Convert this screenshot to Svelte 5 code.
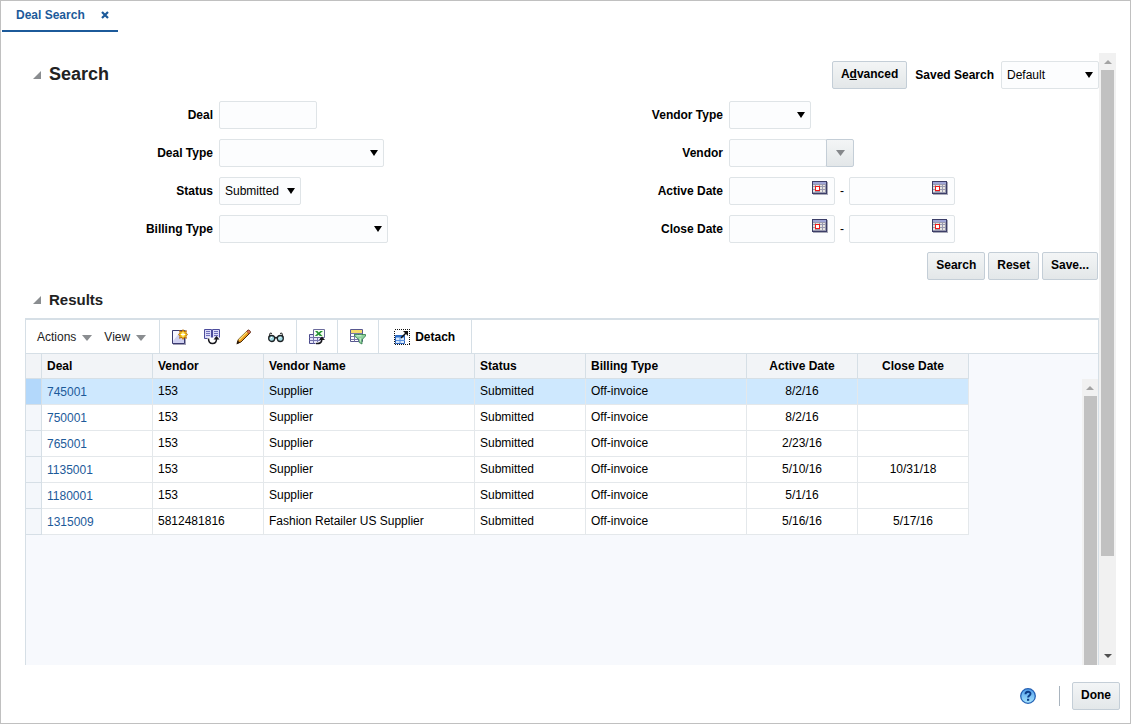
<script lang="ts">
    let deal = $state('');
    let dealType = $state('');
    let status = $state('Submitted');
    let billingType = $state('');
    let vendorType = $state('');
    let vendor = $state('');
    let savedSearch = $state('Default');
    let dates = $state({ activeFrom: '', activeTo: '', closeFrom: '', closeTo: '' });
    let selected = $state('745001');

    const deals = [
        { id: '745001', vendor: '153', name: 'Supplier', active: '8/2/16', close: '' },
        { id: '750001', vendor: '153', name: 'Supplier', active: '8/2/16', close: '' },
        { id: '765001', vendor: '153', name: 'Supplier', active: '2/23/16', close: '' },
        { id: '1135001', vendor: '153', name: 'Supplier', active: '5/10/16', close: '10/31/18' },
        { id: '1180001', vendor: '153', name: 'Supplier', active: '5/1/16', close: '' },
        { id: '1315009', vendor: '5812481816', name: 'Fashion Retailer US Supplier', active: '5/16/16', close: '5/17/16' }
    ];

    function reset() {
        deal = dealType = billingType = vendorType = vendor = '';
        status = 'Submitted';
        dates = { activeFrom: '', activeTo: '', closeFrom: '', closeTo: '' };
    }
</script>

{#snippet disclosure()}
    <svg class="disclosure" width="8" height="8" viewBox="0 0 8 8"><path d="M8 0v8H0z" fill="#8a8d90" /></svg>
{/snippet}

{#snippet calendar()}
    <svg width="16" height="14" viewBox="0 0 16 14" shape-rendering="crispEdges">
        <path d="M1 1h15v13H1z" fill="#a9aab8" />
        <path d="M0 0h15v13H0z" fill="#3c3e68" />
        <path d="M1 1h13v2H1z" fill="#9fa5d6" />
        <path d="M1 3h13v9H1z" fill="#9a9bb0" />
        <path d="M1 4h2v1H1zM4 4h3v1H4zM8 4h2v1H8zM11 4h2v1h-2zM1 6h2v2H1zM8 6h2v2H8zM11 6h2v2h-2zM1 9h2v2H1zM8 9h2v2H8zM11 9h2v2h-2z" fill="#e6e4e0" />
        <path d="M3 5h5v5H3z" fill="#f01818" />
        <path d="M4 6h3v3H4z" fill="#fff" />
    </svg>
{/snippet}

{#snippet dateField(key: keyof typeof dates, label: string)}
    <span class="box date">
        <input type="text" id={key} aria-label={label} bind:value={dates[key]} />
        <button type="button" class="plain" aria-label="Select date">{@render calendar()}</button>
    </span>
{/snippet}

<div class="frame">
    <nav class="tabs">
        <div class="tab">
            <a href="#deal-search">Deal Search</a>
            <button type="button" class="plain" aria-label="Close tab">
                <svg width="8" height="8" viewBox="0 0 8 8"><path d="M1 1l6 6M7 1L1 7" stroke="#1c5a9a" stroke-width="2.200" /></svg>
            </button>
        </div>
    </nav>

    <div class="scroller">
        <main>
            <form class="search" onsubmit={(e) => e.preventDefault()}>
                <header>
                    {@render disclosure()}
                    <h1>Search</h1>
                    <button type="button" class="btn">A<u>d</u>vanced</button>
                    <label for="saved">Saved Search</label>
                    <span class="select saved">
                        <select id="saved" bind:value={savedSearch}><option>Default</option></select>
                    </span>
                </header>

                <div class="fields">
                    <div class="column">
                        <div class="field">
                            <label for="deal">Deal</label>
                            <input class="box short" type="text" id="deal" bind:value={deal} />
                        </div>
                        <div class="field">
                            <label for="deal-type">Deal Type</label>
                            <span class="select wide">
                                <select id="deal-type" bind:value={dealType}><option value=""></option></select>
                            </span>
                        </div>
                        <div class="field">
                            <label for="status">Status</label>
                            <span class="select fit">
                                <select id="status" bind:value={status}><option>Submitted</option></select>
                            </span>
                        </div>
                        <div class="field">
                            <label for="billing-type">Billing Type</label>
                            <span class="select wider">
                                <select id="billing-type" bind:value={billingType}><option value=""></option></select>
                            </span>
                        </div>
                    </div>
                    <div class="column">
                        <div class="field">
                            <label for="vendor-type">Vendor Type</label>
                            <span class="select fit">
                                <select id="vendor-type" bind:value={vendorType}><option value=""></option></select>
                            </span>
                        </div>
                        <div class="field">
                            <label for="vendor">Vendor</label>
                            <input class="box short" type="text" id="vendor" bind:value={vendor} />
                            <button type="button" class="btn lov" aria-label="Search vendors">
                                <svg width="9" height="6" viewBox="0 0 9 6"><path d="M0 0h9L4.500 6z" fill="#85888b" /></svg>
                            </button>
                        </div>
                        <div class="field">
                            <label for="activeFrom">Active Date</label>
                            {@render dateField('activeFrom', 'Active date from')}
                            <span class="dash">-</span>
                            {@render dateField('activeTo', 'Active date to')}
                        </div>
                        <div class="field">
                            <label for="closeFrom">Close Date</label>
                            {@render dateField('closeFrom', 'Close date from')}
                            <span class="dash">-</span>
                            {@render dateField('closeTo', 'Close date to')}
                        </div>
                    </div>
                </div>

                <div class="actions">
                    <button type="submit" class="btn">Search</button>
                    <button type="button" class="btn" onclick={reset}>Reset</button>
                    <button type="button" class="btn">Save...</button>
                </div>
            </form>

            <section class="results">
                <header>
                    {@render disclosure()}
                    <h2>Results</h2>
                </header>

                <div class="panel">
                    <div class="toolbar">
                        <div class="group menus">
                            <button type="button" class="plain menu">Actions</button>
                            <button type="button" class="plain menu">View</button>
                        </div>
                        <div class="group">
                            <button type="button" class="plain" aria-label="Create">
                                <svg width="16" height="16" viewBox="0 0 16 16">
                                    <path d="M1 1h13v15H1z" fill="#a3a2b4" />
                                    <path d="M.5 1.500h12v13H.5z" fill="#cfd0f0" stroke="#39396f" />
                                    <path d="M1 2h8L1 12z" fill="#f6f6ff" />
                                    <path d="M11 0l1.300 2L15 1.300 14.400 4 16 5.500 14.400 7l.6 2.700-2.700-.7L11 11 9.700 9 7 9.700 7.600 7 6 5.500 7.600 4 7 1.300 9.700 2z" fill="#b96c08" />
                                    <path d="M11 1.200l1 2.300 2-1-.8 2 2 1-2 1 .8 2-2-1-1 2.300-1-2.300-2 1 .8-2-2-1 2-1-.8-2 2 1z" fill="#ffd92e" />
                                    <path d="M10.500 3.500h1V5H13v1h-1.500v1.500h-1V6H9V5h1.500z" fill="#fff" />
                                </svg>
                            </button>
                            <button type="button" class="plain" aria-label="Create from existing">
                                <svg width="16" height="16" viewBox="0 0 16 16">
                                    <path d="M.5.5h7v9h-7zM8.500.5h7v9h-7z" fill="#dcdcf8" stroke="#4c4c9c" />
                                    <path d="M2 2.500h4M2 4.500h4M2 6.500h4M10 2.500h4M10 4.500h4M10 6.500h4" stroke="#6f6fbb" />
                                    <path d="M3.500 8.500H16V10H3.500z" fill="#fff" />
                                    <path d="M4.500 9.500c0 3 1.500 5 4 5s4-1.500 4-4.500" fill="none" stroke="#17171d" stroke-width="1.500" />
                                    <path d="M9.500 10.500l3-3.500 3 3.500z" fill="#17171d" />
                                </svg>
                            </button>
                            <button type="button" class="plain" aria-label="Edit">
                                <svg width="16" height="16" viewBox="0 0 16 16">
                                    <path d="M1 14.500l1.300-4L11.500 1.500c1-1 3.500 1 2.500 2.500L5 13z" fill="#e9981b" stroke="#4a2c0b" />
                                    <path d="M3 11L11.500 2.500" stroke="#ffdf70" stroke-width="1.400" />
                                    <path d="M10.700 2.300l1.200-1.100c1.200-.7 3 1 2.300 2.400L13.300 5z" fill="#df7355" stroke="#5b1f16" stroke-width=".6" />
                                    <path d="M1.700 11.700l2.500 1.700L.5 15.500z" fill="#221408" />
                                </svg>
                            </button>
                            <button type="button" class="plain" aria-label="View">
                                <svg width="16" height="16" viewBox="0 0 16 16">
                                    <path d="M.8 8.500L2.200 4l1.800.5M15.200 8.500L13.800 4l-1.800.5" fill="none" stroke="#222" />
                                    <path d="M6.500 9.500q1.500-2 3 0" fill="none" stroke="#222" stroke-width="1.300" />
                                    <circle cx="3.700" cy="9.500" r="3" fill="#a4dce6" stroke="#1d2225" stroke-width="1.300" />
                                    <circle cx="12.300" cy="9.500" r="3" fill="#a4dce6" stroke="#1d2225" stroke-width="1.300" />
                                    <path d="M2.500 9.500L4 8M11 9.500L12.500 8" stroke="#fff" />
                                </svg>
                            </button>
                        </div>
                        <div class="group">
                            <button type="button" class="plain" aria-label="Export to Excel">
                                <svg width="16" height="16" viewBox="0 0 16 16">
                                    <path d="M.5 5.500h11v9H.5z" fill="#e6e6fa" stroke="#49498b" />
                                    <path d="M.5 8.500h11M.5 11.500h11M4.500 5.500v9M8.500 5.500v9" stroke="#7676ae" />
                                    <path d="M4.500.5h11v8h-11z" fill="#f5fff3" stroke="#6b6b9c" />
                                    <path d="M6 2h2.500l1.200 1.500L11.500 2H14l-3 2.600L13.500 7h-2.700L9.500 5.700 8 7H5.800l2.600-2.400z" fill="#279334" />
                                    <path d="M6.500 14.500c4 .5 6.500-.5 6.500-4" fill="none" stroke="#fff" stroke-width="3" />
                                    <path d="M7 14.500c4 .3 5.800-1 5.800-4" fill="none" stroke="#17171d" stroke-width="1.600" />
                                    <path d="M10 11l3-3.500 3 3.500z" fill="#17171d" />
                                </svg>
                            </button>
                        </div>
                        <div class="group">
                            <button type="button" class="plain" aria-label="Query by example">
                                <svg width="16" height="16" viewBox="0 0 16 16">
                                    <path d="M.5.5h12v12H.5z" fill="#fff" stroke="#57578f" />
                                    <path d="M1 1h11v3H1z" fill="#f4dc6b" />
                                    <path d="M.5 4.500h12M.5 7.500h12M.5 10.500h12M4.500 5v7.500M8.500 5v7.500" stroke="#7777a8" />
                                    <path d="M4.500 5.500h11V7L12 10.800V15l-2.800-1.500v-2.700L4.500 7z" fill="#8ed19c" stroke="#2e7a46" stroke-width=".8" />
                                    <path d="M6.500 6.800h5M10.200 9v3.500" stroke="#d8f5dc" />
                                </svg>
                            </button>
                        </div>
                        <div class="group detach">
                            <button type="button" class="plain">
                                <svg width="16" height="16" viewBox="0 0 16 16">
                                    <path d="M.5.5h15v15H.5z" fill="#fff" stroke="#111" stroke-dasharray="1 1" shape-rendering="crispEdges" />
                                    <path d="M1.500 6.500h9v8h-9z" fill="#d9ebff" stroke="#2f66bd" />
                                    <path d="M1.500 6.500h9v2h-9z" fill="#2f73cf" />
                                    <path d="M2 11.500h9M6 8.500v6" stroke="#5a92df" />
                                    <path d="M7 9l6-6" stroke="#111" stroke-width="1.500" />
                                    <path d="M9 2h5v5z" fill="#111" />
                                </svg>
                                Detach
                            </button>
                        </div>
                    </div>

                    <div class="grid">
                        <table>
                            <colgroup>
                                <col class="c-head" /><col class="c-mid" /><col class="c-mid" /><col class="c-name" />
                                <col class="c-mid" /><col class="c-billing" /><col class="c-mid" /><col class="c-mid" />
                            </colgroup>
                            <thead>
                                <tr>
                                    <th></th>
                                    <th>Deal</th>
                                    <th>Vendor</th>
                                    <th>Vendor Name</th>
                                    <th>Status</th>
                                    <th>Billing Type</th>
                                    <th class="center">Active Date</th>
                                    <th class="center">Close Date</th>
                                </tr>
                            </thead>
                            <tbody>
                                {#each deals as row (row.id)}
                                    <tr class:selected={row.id === selected} onclick={() => (selected = row.id)}>
                                        <td class="rowhead"></td>
                                        <td class="link"><a href="#{row.id}">{row.id}</a></td>
                                        <td>{row.vendor}</td>
                                        <td>{row.name}</td>
                                        <td>Submitted</td>
                                        <td>Off-invoice</td>
                                        <td class="center">{row.active}</td>
                                        <td class="center">{row.close}</td>
                                    </tr>
                                {/each}
                            </tbody>
                        </table>
                        <div class="scrollbar inner">
                            <svg width="8" height="4" viewBox="0 0 8 4"><path d="M0 4l4-4 4 4z" fill="#a3a3a3" /></svg>
                            <div class="thumb"></div>
                        </div>
                    </div>
                </div>
            </section>
        </main>

        <div class="scrollbar">
            <svg width="8" height="4" viewBox="0 0 8 4"><path d="M0 4l4-4 4 4z" fill="#a3a3a3" /></svg>
            <div class="thumb"></div>
            <div class="rest"></div>
            <svg width="8" height="4" viewBox="0 0 8 4"><path d="M0 0h8L4 4z" fill="#505050" /></svg>
        </div>
    </div>

    <footer>
        <button type="button" class="plain help" aria-label="Help">
            <svg width="16" height="16" viewBox="0 0 16 16">
                <defs>
                    <linearGradient id="help" x1="0" y1="0" x2="0" y2="1">
                        <stop offset="0" stop-color="#4d9cea" />
                        <stop offset="1" stop-color="#a9e6ff" />
                    </linearGradient>
                </defs>
                <circle cx="8" cy="8" r="7.300" fill="url(#help)" stroke="#2461b4" stroke-width="1.300" />
                <path d="M5.500 6.300c0-3.400 5-3.400 5-.5 0 1.700-2.400 1.700-2.400 3.800" fill="none" stroke="#0d3c87" stroke-width="1.900" />
                <path d="M7 10.800h2.200v2H7z" fill="#0d3c87" />
            </svg>
        </button>
        <span class="divider"></span>
        <button type="button" class="btn">Done</button>
    </footer>
</div>

<style>
    :global(body) {
        margin: 0;
        background: #fff;
    }

    .frame {
        box-sizing: border-box;
        display: flex;
        flex-direction: column;
        min-height: 100vh;
        border: 1px solid #c0c0c0;
        font: 12px/16px "Liberation Sans", Arial, sans-serif;
        color: #000;
    }

    .frame *,
    .frame *::before,
    .frame *::after {
        box-sizing: border-box;
    }

    svg {
        display: block;
        flex: none;
    }

    button,
    input,
    select {
        font: inherit;
        color: inherit;
    }

    h1,
    h2 {
        margin: 0;
        color: #222;
    }

    h1 {
        font-size: 18px;
        line-height: 24px;
    }

    h2 {
        font-size: 15px;
        line-height: 20px;
    }

    label {
        font-weight: bold;
    }

    .plain {
        display: flex;
        align-items: center;
        padding: 0;
        border: 0;
        background: none;
    }

    .btn {
        height: 28px;
        padding: 0 8px 2px;
        border: 1px solid #c4ced7;
        border-radius: 2px;
        background: linear-gradient(#f3f5f6, #e3e7e9);
        font-weight: bold;
    }

    /* tabs */
    .tabs {
        display: flex;
        padding-left: 1px;
    }

    .tab {
        display: flex;
        align-items: center;
        gap: 16px;
        height: 31px;
        padding: 0 9px 2px 14px;
        border-bottom: 2px solid #1c5a9a;
    }

    .tab a {
        color: #1c5a9a;
        font-weight: bold;
        text-decoration: none;
    }

    .scroller {
        display: flex;
        flex: 1;
        margin: 21px 14px 0 24px;
    }

    main {
        display: flex;
        flex: 1;
        flex-direction: column;
        min-width: 0;
    }

    /* search form */
    .search {
        padding-top: 8px;
    }

    header {
        display: flex;
        align-items: center;
        padding-left: 8px;
    }

    .search header h1 {
        flex: 1;
        padding-bottom: 2px;
    }

    .disclosure {
        margin-right: 8px;
    }

    .search header label {
        margin: 0 7px 0 8px;
    }

    .fields {
        display: grid;
        grid-template-columns: 510fr 564fr;
        margin: 12px 0 9px;
    }

    .column {
        display: flex;
        flex-direction: column;
        gap: 10px;
    }

    .field {
        display: flex;
        align-items: center;
    }

    .field label {
        width: 188px;
        margin-right: 6px;
        text-align: right;
    }

    .box,
    .select select {
        height: 28px;
        border: 1px solid #dfe4e7;
        border-radius: 2px;
        background: #fcfdfe;
    }

    .short {
        width: 98px;
        padding: 0 5px;
    }

    .select {
        position: relative;
        display: block;
    }

    .select select {
        display: block;
        width: 100%;
        padding: 0 18px 0 5px;
        appearance: none;
    }

    .select::after {
        content: "";
        position: absolute;
        top: 11px;
        right: 6px;
        border: solid transparent;
        border-width: 6px 4px 0;
        border-top-color: #000;
        pointer-events: none;
    }

    .saved {
        width: 98px;
    }

    .wide {
        width: 165px;
    }

    .wider {
        width: 169px;
    }

    .fit {
        width: 82px;
    }

    .lov {
        display: flex;
        align-items: center;
        justify-content: center;
        width: 28px;
        margin-left: -1px;
        padding: 0;
        border-radius: 0 2px 2px 0;
    }

    .date {
        display: flex;
        width: 106px;
    }

    .date input {
        flex: 1;
        min-width: 0;
        padding: 0 5px;
        border: 0;
        background: none;
    }

    .date .plain {
        align-items: flex-start;
        padding: 3px 6px 0 0;
    }

    .dash {
        width: 14px;
        text-align: center;
    }

    .actions {
        display: flex;
        justify-content: flex-end;
        gap: 3px;
        padding-right: 1px;
    }

    /* results */
    .results {
        display: flex;
        flex: 1;
        flex-direction: column;
        margin-top: 10px;
    }

    .results header {
        margin-bottom: 8px;
    }

    .panel {
        display: flex;
        flex: 1;
        flex-direction: column;
        border: 1px solid #d6dfe6;
        border-top-width: 2px;
        border-bottom: 0;
    }

    .toolbar {
        display: flex;
        height: 33px;
    }

    .group {
        display: flex;
        align-items: center;
        gap: 16px;
        padding: 0 12px;
        border-right: 1px solid #d6dfe6;
    }

    .menus {
        gap: 12px;
        padding: 0 13px 0 11px;
    }

    .menu {
        gap: 6px;
        color: #222;
    }

    .menu::after {
        content: "";
        margin-top: 2px;
        border: solid transparent;
        border-width: 6px 5px 0;
        border-top-color: #8a8d90;
    }

    .detach {
        padding: 0 16px 0 15px;
    }

    .detach .plain {
        gap: 5px;
        font-weight: bold;
    }

    .grid {
        display: flex;
        flex: 1;
        align-items: flex-start;
        justify-content: space-between;
        border-top: 1px solid #d6dfe6;
        background: #f7f9fd;
    }

    table {
        width: 943px;
        table-layout: fixed;
        border-collapse: separate;
        border-spacing: 0;
    }

    .c-head {
        width: 16px;
    }

    .c-mid {
        width: 111px;
    }

    .c-name {
        width: 211px;
    }

    .c-billing {
        width: 161px;
    }

    th,
    td {
        padding: 0 5px;
        border-right: 1px solid #e4e8eb;
        border-bottom: 1px solid #e4e8eb;
        text-align: left;
    }

    th {
        height: 25px;
        border-color: #d6dfe6;
        background: #f2f4f7;
    }

    td {
        height: 26px;
        padding-bottom: 2px;
        background: #fff;
    }

    td.link {
        padding-bottom: 0;
    }

    .rowhead {
        border-color: #d6dfe6;
        background: #f4f7fb;
    }

    .center {
        text-align: center;
    }

    td a {
        color: #1c5a9a;
        text-decoration: none;
    }

    .selected td {
        background: #cee8fe;
    }

    .selected .rowhead {
        background: #b3d8fb;
    }

    .scrollbar {
        display: flex;
        flex-direction: column;
        align-items: center;
        width: 17px;
        padding: 7px 0;
        background: #f1f1f1;
    }

    .thumb {
        flex: 486;
        width: 13px;
        margin-top: 6px;
        background: #c1c1c1;
    }

    .rest {
        flex: 98;
    }

    .inner {
        align-self: stretch;
        width: 16px;
        margin-top: 25px;
        padding-bottom: 0;
    }

    footer {
        display: flex;
        align-items: center;
        justify-content: flex-end;
        padding: 17px 10px 13px;
    }

    .divider {
        width: 1px;
        height: 20px;
        margin: 0 12px 0 23px;
        background: #a9b4be;
    }
</style>
